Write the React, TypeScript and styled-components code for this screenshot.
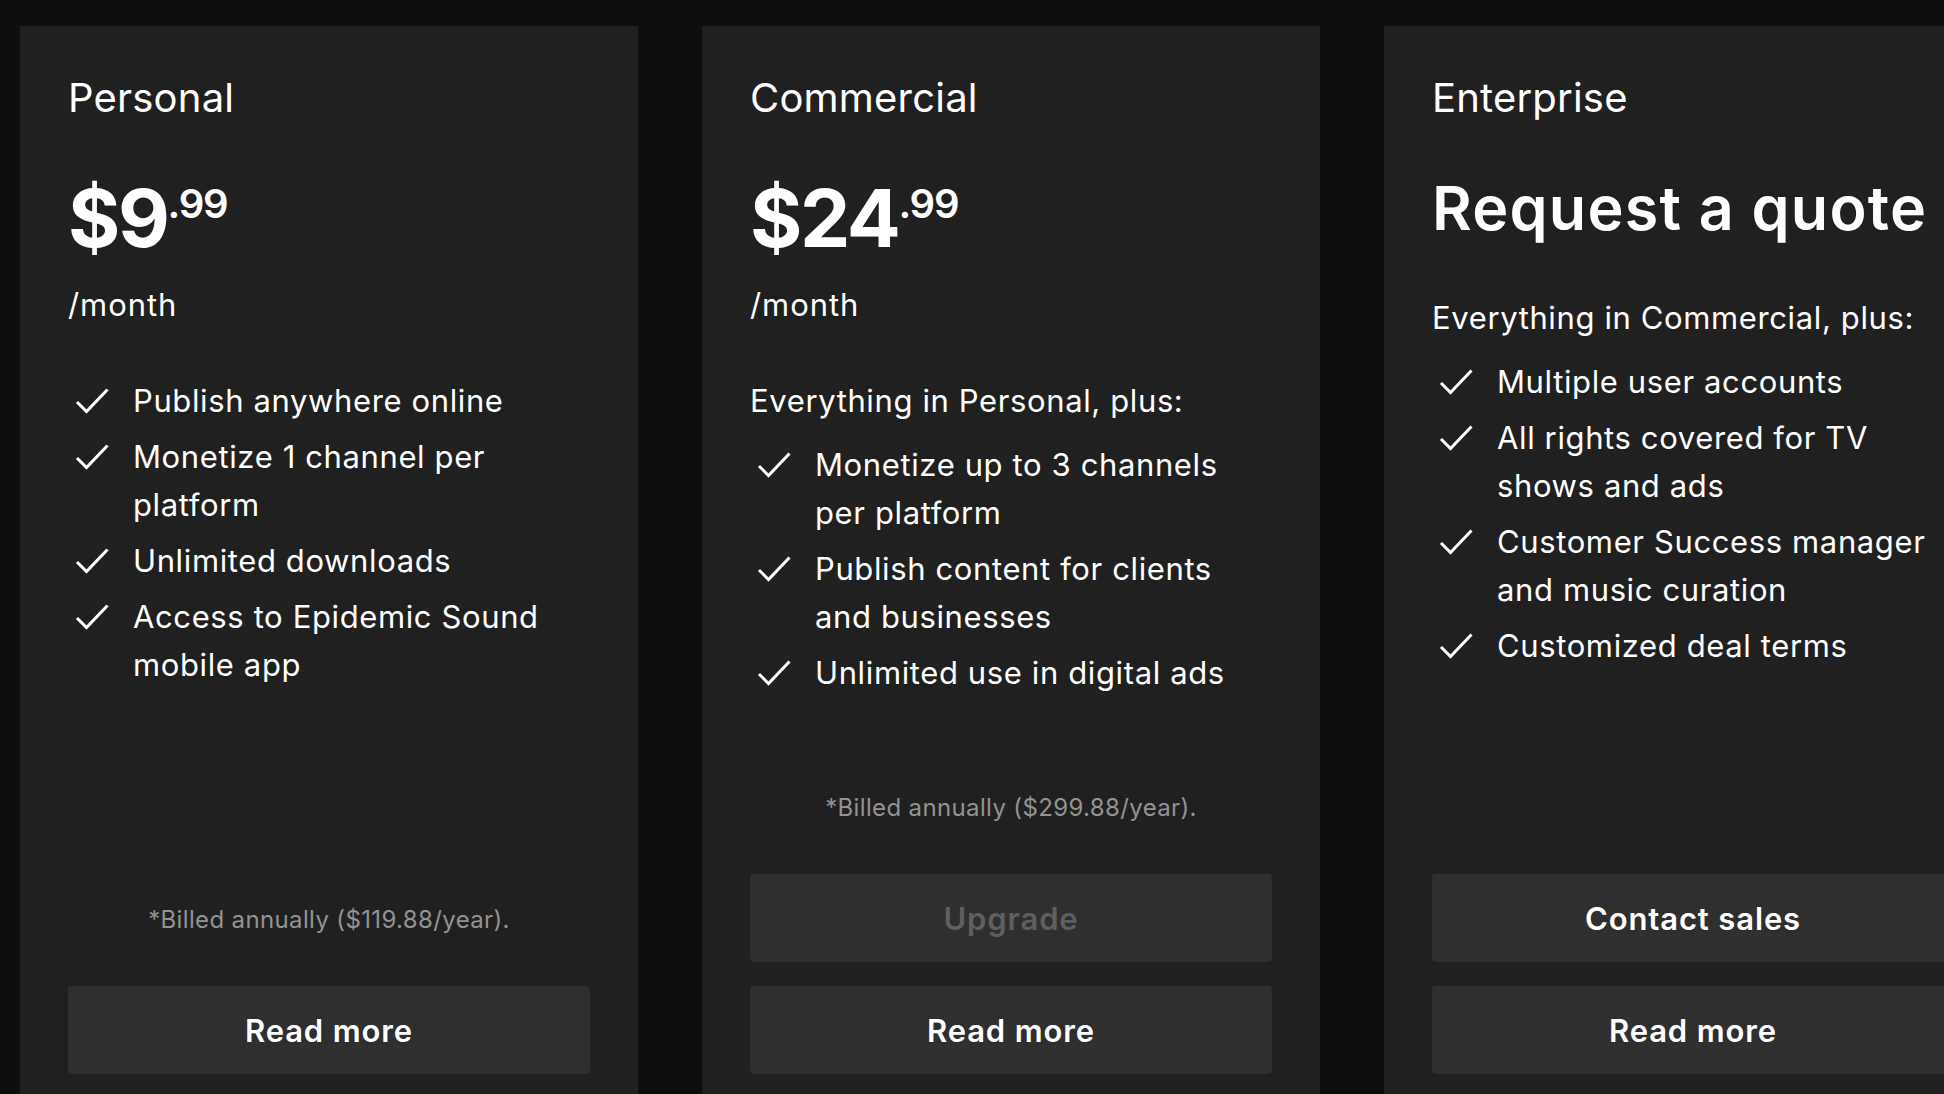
import React from "react";
import styled, { createGlobalStyle } from "styled-components";

const GlobalStyle = createGlobalStyle`
  html, body {
    margin: 0;
    padding: 0;
    background: #0e0e0e;
    overflow: hidden;
  }
  body {
    font-family: Inter, "Noto Sans", "Liberation Sans", sans-serif;
    color: #ffffff;
    -webkit-font-smoothing: antialiased;
  }
  * { box-sizing: border-box; }
`;

const Page = styled.main`
  display: flex;
  align-items: stretch;
  gap: 64px;
  padding: 26px 0 0 20px;
  width: max-content;
`;

const Card = styled.section`
  flex: 0 0 618px;
  width: 618px;
  min-height: 1096px;
  background: #202020;
  padding: 48px;
  display: flex;
  flex-direction: column;
`;

const PlanName = styled.h2`
  margin: 0;
  font-size: 40px;
  line-height: 48px;
  font-weight: 400;
  letter-spacing: 0.005em;
`;

const PriceRow = styled.div`
  margin-top: 48px;
  display: flex;
  align-items: flex-start;
`;

const PriceMain = styled.span`
  font-size: 80px;
  line-height: 96px;
  font-weight: 700;
  letter-spacing: -0.03em;
`;

const PriceCents = styled.span`
  font-size: 40px;
  line-height: 40px;
  font-weight: 600;
  margin-top: 14px;
  letter-spacing: -0.03em;
`;

const Quote = styled.div`
  margin-top: 48px;
  font-size: 61px;
  line-height: 76px;
  font-weight: 600;
  letter-spacing: 0.02em;
  white-space: nowrap;
`;

const Period = styled.div`
  margin-top: 15px;
  font-size: 31px;
  line-height: 48px;
  letter-spacing: 0.03em;
`;

const Lead = styled.p`
  margin: 48px 0 0;
  font-size: 31px;
  line-height: 48px;
  letter-spacing: 0.02em;
`;

const Features = styled.ul<{ $afterLead?: boolean }>`
  list-style: none;
  margin: ${(p) => (p.$afterLead ? "16px" : "48px")} 0 0;
  padding: 0;
  display: flex;
  flex-direction: column;
  gap: 8px;
`;

const Feature = styled.li`
  display: flex;
  align-items: flex-start;
  font-size: 31px;
  line-height: 48px;
  letter-spacing: 0.02em;
`;

const Check = styled.svg`
  flex: 0 0 34px;
  width: 34px;
  height: 26px;
  margin: 11px 24px 0 7px;
`;

const Footer = styled.div`
  margin-top: auto;
  display: flex;
  flex-direction: column;
  gap: 24px;
`;

const Note = styled.p`
  margin: 0 0 24px;
  text-align: center;
  font-size: 24px;
  line-height: 36px;
  letter-spacing: 0.015em;
  color: #939393;
`;

const Button = styled.button<{ $disabled?: boolean }>`
  height: 88px;
  width: 100%;
  border: none;
  border-radius: 4px;
  background: #2f2f2f;
  color: ${(p) => (p.$disabled ? "#5f5f5f" : "#ffffff")};
  font-family: inherit;
  font-size: 31px;
  font-weight: 600;
  letter-spacing: 0.028em;
  cursor: ${(p) => (p.$disabled ? "default" : "pointer")};
`;

const CheckIcon = () => (
  <Check viewBox="0 0 34 26" fill="none" aria-hidden="true">
    <path d="M2 14 L11.5 23.5 L32.5 1.5" stroke="#ffffff" strokeWidth="3" strokeLinejoin="miter" />
  </Check>
);

type Plan = {
  name: string;
  price?: [string, string];
  quote?: string;
  lead?: string;
  features: string[];
  note?: string;
  primary?: { label: string; disabled?: boolean };
};

const plans: Plan[] = [
  {
    name: "Personal",
    price: ["$9", ".99"],
    features: [
      "Publish anywhere online",
      "Monetize 1 channel per platform",
      "Unlimited downloads",
      "Access to Epidemic Sound mobile app",
    ],
    note: "*Billed annually ($119.88/year).",
  },
  {
    name: "Commercial",
    price: ["$24", ".99"],
    lead: "Everything in Personal, plus:",
    features: [
      "Monetize up to 3 channels per platform",
      "Publish content for clients and businesses",
      "Unlimited use in digital ads",
    ],
    note: "*Billed annually ($299.88/year).",
    primary: { label: "Upgrade", disabled: true },
  },
  {
    name: "Enterprise",
    quote: "Request a quote",
    lead: "Everything in Commercial, plus:",
    features: [
      "Multiple user accounts",
      "All rights covered for TV shows and ads",
      "Customer Success manager and music curation",
      "Customized deal terms",
    ],
    primary: { label: "Contact sales" },
  },
];

export default function App() {
  return (
    <>
      <GlobalStyle />
      <Page>
        {plans.map((plan) => (
          <Card key={plan.name}>
            <PlanName>{plan.name}</PlanName>
            {plan.price ? (
              <>
                <PriceRow>
                  <PriceMain>{plan.price[0]}</PriceMain>
                  <PriceCents>{plan.price[1]}</PriceCents>
                </PriceRow>
                <Period>/month</Period>
              </>
            ) : (
              <Quote>{plan.quote}</Quote>
            )}
            {plan.lead && <Lead>{plan.lead}</Lead>}
            <Features $afterLead={!!plan.lead}>
              {plan.features.map((f) => (
                <Feature key={f}>
                  <CheckIcon />
                  <span>{f}</span>
                </Feature>
              ))}
            </Features>
            <Footer>
              {plan.note && <Note>{plan.note}</Note>}
              {plan.primary && (
                <Button $disabled={plan.primary.disabled} disabled={plan.primary.disabled}>
                  {plan.primary.label}
                </Button>
              )}
              <Button>Read more</Button>
            </Footer>
          </Card>
        ))}
      </Page>
    </>
  );
}
